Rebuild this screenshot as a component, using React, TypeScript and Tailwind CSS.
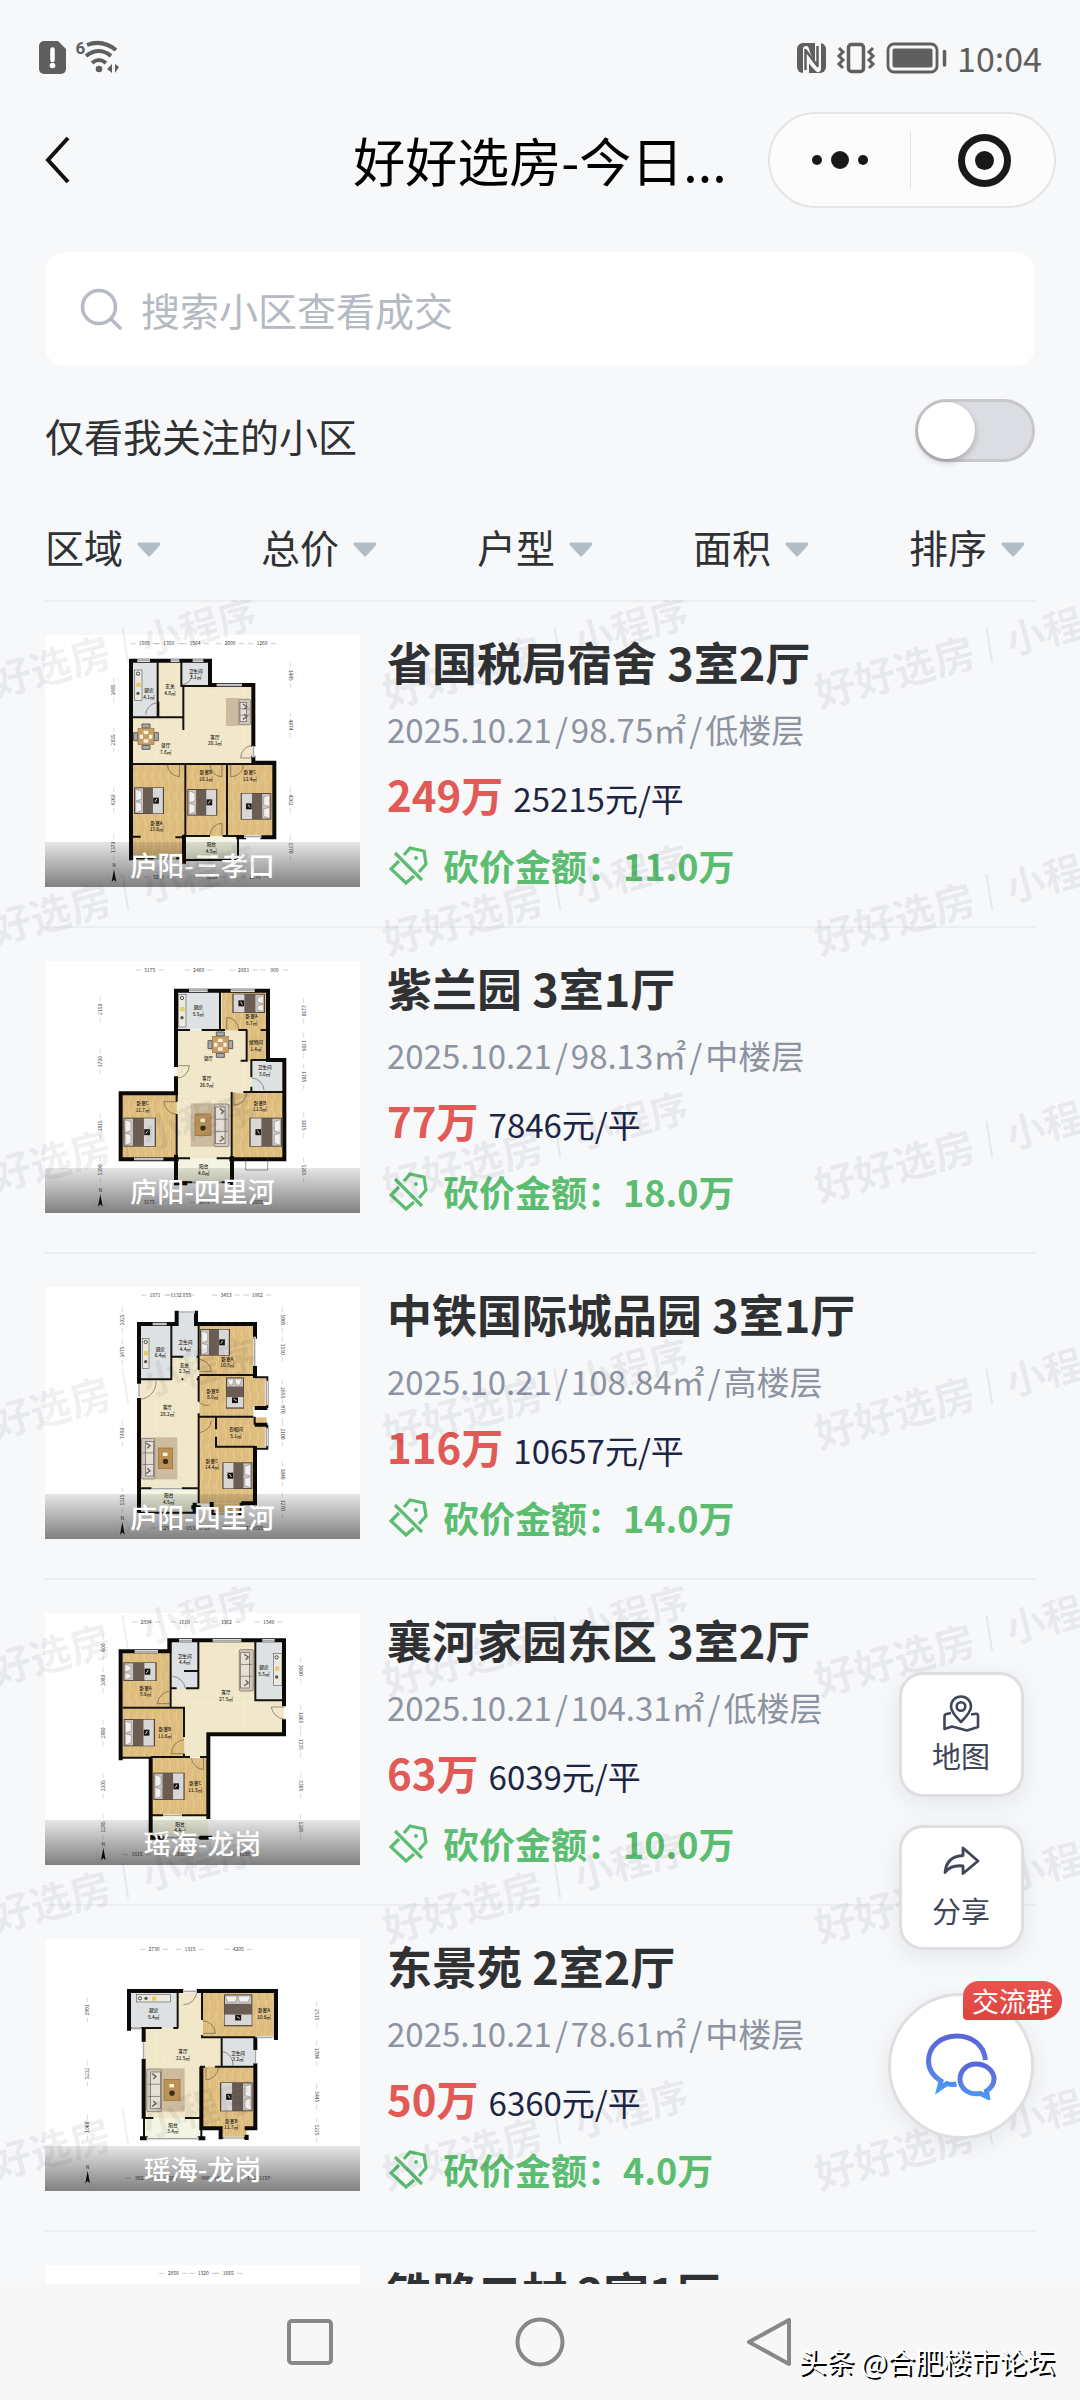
import React from "react";

type Rect = [number, number, number, number];
type BedSpec = [number, number, number, number, ("left" | "right" | "up")?];
type Label = [number, number, string, string?];
type Plan = {
  top: number;
  wood?: Rect[];
  cream?: Rect[];
  tile?: Rect[];
  balcony?: Rect[];
  thick?: string;
  thin?: string;
  windows?: string;
  doors?: string;
  beds?: BedSpec[];
  sofa?: Rect;
  sofaSide?: "left" | "right";
  rug?: Rect;
  coffee?: Rect;
  dining?: [number, number];
  stove?: Rect;
  labels?: Label[];
  dims: [number, number, string][];
  bottomDims?: [number, number, string][];
  leftX?: number;
  rightX?: number;
  leftDims?: [number, string][];
  rightDims?: [number, string][];
  north?: [number, number];
};

const plans: Record<string, Plan> = {
  sanxiaokou: {
    top: 45,
    wood: [[304, 435, 162, 285], [468, 435, 122, 214], [592, 435, 140, 214]],
    cream: [[385, 125, 75, 168], [304, 293, 160, 140], [460, 198, 210, 235]],
    tile: [[308, 125, 75, 165], [455, 125, 87, 70]],
    balcony: [[468, 650, 156, 70]],
    thick: "M303 715V122H540V195H670V375M670 413V428H733V652H697M462 725V650M642 652H625",
    thin: "M383 125V292M385 245V292M304 292H460M454 118V198H540M460 198V330M304 432H735M466 432V650M591 432V648M468 648H540M578 648H640M304 650H332M436 652H466M624 650V720H468M310 715H370M415 715H462",
    windows: "M322 122H360M488 122H520M560 195H636M642 650H694M372 715H438M422 122H448M670 378V412",
    doors: "M383 248a38 38 0 0 0-36 36M412 434a38 38 0 0 0 36 36V434M540 434a36 36 0 0 0 36 36V434M602 434v36a36 36 0 0 0 38-36M668 376a38 38 0 0 0-36 38h36M540 644a36 36 0 0 1 36-34v36M486 160a32 32 0 0 1-30 34",
    beds: [[312, 502, 90, 80], [472, 507, 90, 80], [632, 519, 92, 80, "right"]],
    sofa: [627, 238, 35, 76],
    sofaSide: "right",
    rug: [588, 234, 40, 84],
    dining: [348, 350],
    stove: [314, 150, 22, 92],
    labels: [[357, 218, "厨房", "4.1㎡"], [420, 206, "玄关", "4.8㎡"], [497, 160, "卫生间", "3.1㎡"], [555, 358, "客厅", "20.1㎡"], [407, 384, "餐厅", "7.8㎡"], [380, 616, "卧室A", "13.6㎡"], [528, 464, "卧室B", "10.1㎡"], [660, 464, "卧室C", "12.4㎡"], [544, 680, "阳台", "4.5㎡"]],
    dims: [[343, 76, "1505"], [416, 76, "1350"], [495, 76, "1564"], [600, 76, "2600"], [696, 76, "1260"]],
    bottomDims: [[385, 776, "3250"], [545, 776, "3230"], [675, 776, "2170"]],
    leftX: 251, rightX: 781,
    leftDims: [[210, "3485"], [360, "2835"], [540, "4260"], [682, "1370"]],
    rightDims: [[166, "1445"], [315, "4874"], [540, "4262"], [684, "1370"]],
    north: [252, 768],
  },
  silihe: {
    top: 33,
    wood: [[575, 123, 140, 118], [652, 240, 62, 92], [275, 430, 166, 196], [605, 428, 156, 198]],
    cream: [[440, 240, 208, 95], [440, 330, 225, 98], [440, 425, 165, 200]],
    tile: [[440, 123, 132, 115], [665, 330, 95, 95]],
    balcony: [[440, 624, 165, 72]],
    thick: "M438 345V122H714V330H763V628H604M438 385V430H272V628H440M438 620V700H466M606 624V702",
    thin: "M570 122V240M440 240H480M515 240H585M625 240H652M692 240H714M650 240V332H632M664 330V382M664 410V425M640 426H760M605 426V700M440 430V455M440 492V625M440 625H480M560 625H605M438 697H606M662 330H714",
    windows: "M477 122H533M602 122H674M312 627H400M486 698H575",
    doors: "M440 347h38a40 40 0 0 1-38 38M590 240v-38a38 38 0 0 1 36 38M666 384a38 38 0 0 1 36 36M612 428v38a40 40 0 0 0 38-38M440 455h-38a40 40 0 0 0 36 38M647 626v34h66v-34",
    beds: [[607, 131, 98, 58, "right"], [280, 503, 98, 87], [658, 503, 98, 87, "right"]],
    sofa: [553, 462, 44, 128],
    sofaSide: "right",
    rug: [482, 460, 72, 130],
    coffee: [495, 492, 48, 65],
    dining: [571, 284],
    stove: [446, 133, 22, 98],
    labels: [[505, 180, "厨房", "5.5㎡"], [665, 206, "卧室A", "6.7㎡"], [678, 284, "储物间", "1.4㎡"], [535, 333, "餐厅"], [530, 393, "客厅", "26.9㎡"], [704, 360, "卫生间", "3.0㎡"], [338, 468, "卧室C", "11.7㎡"], [690, 466, "卧室B", "11.5㎡"], [521, 657, "阳台", "4.0㎡"]],
    dims: [[359, 65, "3175"], [506, 65, "2460"], [641, 65, "2661"], [733, 65, "900"]],
    bottomDims: [[358, 762, "3175"], [522, 762, "3075"], [682, 762, "2865"]],
    leftX: 211, rightX: 821,
    leftDims: [[178, "2150"], [335, "3700"], [528, "3815"], [660, "1390"]],
    rightDims: [[182, "2230"], [287, "1705"], [380, "1705"], [525, "3815"], [660, "1265"]],
    north: [211, 752],
  },
  guoji: {
    top: 51,
    wood: [[508, 165, 167, 150], [508, 317, 162, 125], [668, 325, 40, 85], [560, 442, 150, 90], [508, 442, 52, 258], [508, 530, 167, 170], [545, 700, 92, 28]],
    cream: [[427, 262, 78, 70], [330, 328, 176, 328]],
    tile: [[332, 165, 92, 165], [425, 165, 78, 98], [445, 128, 55, 45]],
    balcony: [[330, 656, 176, 70]],
    thick: "M327 335V162H440M440 128V162M498 128V162H675V200M675 294V318M680 414H706M680 464H706M675 534V700H640M327 390V722M494 722V704M545 702V728M490 712H506M635 704V728",
    thin: "M424 165V330M332 328H424M427 260H460M500 260H506M455 328H460M500 328H506M506 165V300M508 315H675M506 318V395M506 430V700M508 440H670M558 440V478M558 500V530H675M330 655H365M455 655H506M327 728H505M674 322H712V414M674 440V464M712 464V536H674M545 732H640M436 126H503",
    windows: "M368 162H410M446 126H495M674 200V288M710 332V405M710 475V528M558 732H625M365 656H455M327 342V382",
    doors: "M330 388a52 52 0 0 0 48-56M506 268a40 40 0 0 1 38 36H506M506 488a40 40 0 0 0 38-36M506 396a36 36 0 0 0 32 10",
    beds: [[510, 177, 90, 80], [588, 322, 54, 94, "up"], [577, 577, 90, 80, "right"]],
    sofa: [334, 505, 40, 122],
    sofaSide: "left",
    rug: [372, 502, 70, 126],
    coffee: [385, 534, 43, 62],
    stove: [337, 205, 20, 90],
    labels: [[391, 244, "厨房", "6.4㎡"], [466, 224, "卫生间", "4.4㎡"], [463, 292, "玄关", "2.3㎡"], [592, 274, "卧室A", "10.5㎡"], [548, 370, "卧室B", "8.0㎡"], [412, 420, "客厅", "28.2㎡"], [618, 486, "衣帽间", "5.1㎡"], [546, 580, "卧室C", "14.4㎡"], [416, 684, "阳台", "4.5㎡"]],
    dims: [[375, 80, "1871"], [452, 80, "1132 855"], [588, 80, "3453"], [682, 80, "1062"]],
    bottomDims: [[402, 779, "3525"], [504, 779, "1534 1753"], [590, 779, "850"], [665, 779, "1127 1025"]],
    leftX: 277, rightX: 757,
    leftDims: [[150, "1025"], [246, "3475"], [490, "7480"], [690, "1315"]],
    rightDims: [[150, "1005"], [238, "3150"], [368, "2655"], [418, "970"], [492, "2100"], [612, "3840"], [706, "1270"]],
    north: [277, 776],
  },
  longgang: {
    top: 38,
    wood: [[278, 150, 145, 174], [278, 325, 185, 148], [365, 473, 168, 172]],
    cream: [[505, 120, 172, 200], [425, 265, 90, 60], [463, 300, 300, 100], [463, 320, 70, 150]],
    tile: [[422, 120, 84, 146], [677, 122, 85, 180]],
    balcony: [[367, 645, 168, 66]],
    thick: "M272 474V153H418V120H762V312M762 363V402H535V650M362 476V712H394M540 712H514",
    thin: "M422 120V320M505 120V265M425 264H440M468 264H506M462 212H505M676 122V300H762M278 322H462V350M462 322V410M462 460V470M272 472H365M362 470H480M510 470H535M365 645H400M455 645H535M362 712H540M424 322H418",
    windows: "M314 153H384M447 120H486M548 120H634M697 120H734M400 645H455M405 712H505",
    doors: "M424 272a42 42 0 0 0-42 38h40M428 228a42 42 0 0 1 38 36M724 320a42 42 0 0 0 38 36M762 320h-38M462 418a42 42 0 0 0-38 42h38M484 472a40 40 0 0 0 36 36V472",
    beds: [[280, 186, 100, 56], [281, 356, 94, 82], [370, 517, 94, 82]],
    sofa: [628, 148, 42, 124],
    sofaSide: "right",
    stove: [730, 160, 26, 96],
    labels: [[347, 270, "卧室A", "9.6㎡"], [464, 174, "卫生间", "4.4㎡"], [588, 284, "客厅", "27.5㎡"], [702, 208, "厨房", "5.5㎡"], [405, 394, "卧室B", "11.6㎡"], [496, 556, "卧室C", "11.5㎡"], [450, 678, "阳台", "4.4㎡"]],
    dims: [[348, 70, "2894"], [463, 70, "1610"], [589, 70, "3362"], [716, 70, "1540"]],
    bottomDims: [[321, 768, "1815"], [448, 768, "3338"], [643, 768, "4838"]],
    leftX: 219, rightX: 812,
    leftDims: [[142, "600"], [240, "3080"], [398, "2880"], [556, "3305"], [680, "1285"]],
    rightDims: [[210, "3600"], [352, "1865"], [432, "1335"], [556, "3305"], [680, "1285"]],
    north: [220, 762],
  },
  dongjing: {
    top: 57,
    wood: [[518, 218, 220, 134], [515, 440, 158, 184], [578, 620, 72, 34]],
    cream: [[445, 218, 72, 140], [345, 324, 172, 270], [505, 350, 72, 92]],
    tile: [[302, 218, 140, 106], [577, 352, 96, 88]],
    balcony: [[342, 594, 172, 62]],
    thick: "M297 326V213H454M506 213H738V354M341 330V360M341 422V590M676 358V384M676 436V625H650M514 446V625H572V652M650 650V654M336 655H347M509 655H520",
    thin: "M443 218V324M302 324H395M430 324H445M516 218V300M516 345V352H676M575 352V440M510 440H525M555 440H676M345 594H370M465 594H514M342 594V656M514 594V656M342 657H514M578 654H650",
    windows: "M460 214H500M341 365V417M676 390V430M682 352H728M350 656H506M580 654H642M304 326H334",
    doors: "M500 218a40 40 0 0 1-40 36M518 302a40 40 0 0 1 38 38H520M577 394a40 40 0 0 1 32 42M528 442v38a42 42 0 0 0 38-38",
    beds: [[582, 223, 85, 96, "up"], [570, 487, 98, 87, "right"]],
    sofa: [350, 447, 44, 128],
    sofaSide: "left",
    rug: [392, 445, 72, 130],
    coffee: [402, 478, 48, 64],
    stove: [320, 224, 102, 22],
    labels: [[371, 278, "厨房", "5.4㎡"], [702, 279, "卧室A", "10.6㎡"], [459, 402, "客厅", "21.5㎡"], [624, 406, "卫生间", "3.2㎡"], [604, 610, "卧室B", "11.7㎡"], [429, 622, "阳台", "3.4㎡"]],
    dims: [[372, 93, "2730"], [480, 93, "1315"], [625, 93, "4205"]],
    bottomDims: [[328, 779, "902"], [425, 779, "3201"], [545, 779, "900 1348"], [685, 779, "1702 1157"]],
    leftX: 172, rightX: 860,
    leftDims: [[270, "1991"], [460, "5232"], [622, "1068"]],
    rightDims: [[284, "2515"], [400, "1704"], [530, "3445"], [630, "1225"]],
    north: [173, 772],
  },
  tielu: {
    top: 0,
    dims: [[430, 30, "2850"], [520, 30, "1320"], [595, 30, "1665"]],
  },
};

function Bed({ spec }: { spec: BedSpec }) {
  const [x, y, w, h, dir = "left"] = spec;
  const long = dir === "up" ? h : w;
  const wide = dir === "up" ? w : h;
  const turn =
    dir === "right"
      ? `translate(${x + w} ${y}) scale(-1 1)`
      : dir === "up"
        ? `translate(${x + w} ${y}) rotate(90)`
        : `translate(${x} ${y})`;
  return (
    <g transform={turn}>
      <rect width={long} height={wide} fill="#55483f" />
      <rect x="3" y="3" width={long * 0.27} height={wide - 6} fill="#c9c5c2" />
      <path d={`M5 6l18 6v${wide / 2 - 16}l-18 5zM5 ${wide / 2 + 3}l18 5v${wide / 2 - 18}l-18 6z`} fill="#f2f0ee" stroke="#7d7570" strokeWidth="1.5" />
      <rect x={long * 0.3} y="2" width={long * 0.33} height={wide - 4} fill="#695d54" />
      <rect x={long * 0.63} y="2" width={long * 0.33} height={wide - 4} fill="#d9d7d5" />
      <rect x={long * 0.64} y={wide / 2 - 9} width="17" height="18" fill="#17130f" />
      <path d={`M${long * 0.64 + 5} ${wide / 2 + 4}l6-9`} stroke="#fff" strokeWidth="2.5" />
    </g>
  );
}

function Rects({ list, fill }: { list?: Rect[]; fill: string }) {
  return (
    <>
      {(list ?? []).map(([x, y, w, h]) => (
        <rect key={`${x}-${y}-${w}`} x={x} y={y} width={w} height={h} fill={fill} />
      ))}
    </>
  );
}

function FloorPlan({ id }: { id: string }) {
  const p = plans[id];
  const wood = `wood-${id}`;
  const cream = `cream-${id}`;
  const tile = `tile-${id}`;
  const bottom = p.bottomDims ?? [];
  return (
    <svg viewBox={`45 ${p.top} 945 756`} className="block h-full w-full bg-white" role="img" aria-label="户型图">
      <defs>
        <pattern id={wood} width="24" height="60" patternUnits="userSpaceOnUse">
          <rect width="24" height="60" fill="#e0c083" />
          <path d="M4 0v40M10 20v40M17 0v60M22 10v30" stroke="#d8b372" strokeWidth="2" />
          <path d="M13 0v30M7 30v30" stroke="#e9cf98" strokeWidth="2" />
        </pattern>
        <pattern id={cream} width="22" height="22" patternUnits="userSpaceOnUse">
          <rect width="22" height="22" fill="#f2e8cb" />
          <path d="M2 4l5 3M12 15l6-4M14 3l3 4" stroke="#e8dab4" strokeWidth="2.5" />
        </pattern>
        <pattern id={tile} width="12" height="12" patternUnits="userSpaceOnUse">
          <rect width="12" height="12" fill="#dfe2e4" />
          <path d="M0 0H12M0 0V12" stroke="#d3d7da" />
        </pattern>
      </defs>
      <Rects list={p.cream} fill={`url(#${cream})`} />
      <Rects list={p.wood} fill={`url(#${wood})`} />
      <Rects list={p.tile} fill={`url(#${tile})`} />
      <Rects list={p.balcony} fill="#f3f5e2" />
      {p.rug && <rect x={p.rug[0]} y={p.rug[1]} width={p.rug[2]} height={p.rug[3]} fill="#cdbba0" />}
      {p.coffee && (
        <g>
          <rect x={p.coffee[0]} y={p.coffee[1]} width={p.coffee[2]} height={p.coffee[3]} fill="#bb9256" stroke="#97713b" strokeWidth="2" />
          <circle cx={p.coffee[0] + p.coffee[2] / 2} cy={p.coffee[1] + p.coffee[3] * 0.65} r="8" fill="#3a2d1f" />
          <rect x={p.coffee[0] + p.coffee[2] / 2 - 8} y={p.coffee[1] + 14} width="14" height="10" fill="#f5efe6" />
        </g>
      )}
      {p.sofa && (
        <g stroke="#6a605a" strokeWidth="2">
          <rect x={p.sofa[0]} y={p.sofa[1]} width={p.sofa[2]} height={p.sofa[3]} rx="4" fill="#cfc6bd" />
          <rect x={p.sofa[0] + (p.sofaSide === "right" ? 3 : 12)} y={p.sofa[1] + 9} width={p.sofa[2] - 15} height={p.sofa[3] - 18} fill="#e6dfd8" />
          <path d={`M${p.sofa[0] + 4} ${p.sofa[1] + p.sofa[3] / 3 + 3}h${p.sofa[2] - 8}M${p.sofa[0] + 4} ${p.sofa[1] + (p.sofa[3] * 2) / 3 - 3}h${p.sofa[2] - 8}`} fill="none" />
          <path d={`M${p.sofa[0] + p.sofa[2] / 2 - 6} ${p.sofa[1] + 14}l12 8-8 8M${p.sofa[0] + p.sofa[2] / 2 - 6} ${p.sofa[1] + p.sofa[3] - 16}l12-8-8-8`} fill="none" strokeWidth="4" />
        </g>
      )}
      {p.dining && (
        <g transform={`translate(${p.dining[0]} ${p.dining[1]})`}>
          <path d="M-12-38h24v12h-24zM-12 26h24v12h-24zM-37-12h12v24h-12zM25-12h12v24h-12z" fill="#a9a9aa" stroke="#5d5d5f" strokeWidth="3" />
          <rect x="-24" y="-24" width="48" height="48" fill="#c79e66" stroke="#95703f" strokeWidth="2" />
          <path d="M-7-18h14v10h-14zM-7 8h14v10h-14zM-19-6h10v12h-10zM9-6h10v12h-10z" fill="#f7f1e4" />
        </g>
      )}
      {p.stove && (
        <g>
          <rect x={p.stove[0]} y={p.stove[1]} width={p.stove[2]} height={p.stove[3]} fill="#eceae0" stroke="#3c3c3c" strokeWidth="1.5" />
          <rect x={p.stove[0] + (p.stove[2] > p.stove[3] ? 46 : 5)} y={p.stove[1] + (p.stove[2] > p.stove[3] ? 5 : 38)} width="13" height="13" fill="#e6cf62" />
          <circle cx={p.stove[0] + 10} cy={p.stove[1] + 11} r="5" fill="none" stroke="#333" strokeWidth="2.5" />
          <circle cx={p.stove[0] + (p.stove[2] > p.stove[3] ? 28 : 10)} cy={p.stove[1] + (p.stove[2] > p.stove[3] ? 11 : 70)} r="5" fill="#555" />
        </g>
      )}
      {(p.beds ?? []).map((b) => (
        <Bed key={`${b[0]}-${b[1]}`} spec={b} />
      ))}
      <g fill="none">
        <path d={p.thin} stroke="#15120e" strokeWidth="6" />
        <path d={p.thick} stroke="#0c0a08" strokeWidth="12" strokeLinecap="square" />
        <path d={p.windows} stroke="#e9ebec" strokeWidth="8" />
        <path d={p.windows} stroke="#6d7173" strokeWidth="2" />
        <path d={p.doors} stroke="#5a5240" strokeWidth="1.8" />
      </g>
      <g fill="#2b2620" fontSize="14" fontWeight="500" textAnchor="middle">
        {(p.labels ?? []).map(([x, y, a, b]) => (
          <g key={`${x}-${y}`}>
            <text x={x} y={y - 2}>{a}</text>
            {b && <text x={x} y={y + 18}>{b}</text>}
          </g>
        ))}
      </g>
      <g fill="#3c3c3c" fontSize="15" textAnchor="middle">
        {[...p.dims, ...bottom].map(([x, y, t]) => (
          <g key={`${x}-${y}`}>
            <text x={x} y={y}>{t}</text>
            <path d={`M${x - 42} ${y - 5}h16M${x + 26} ${y - 5}h16`} stroke="#9a9a9a" strokeWidth="1.5" />
          </g>
        ))}
        {(p.leftDims ?? []).map(([y, t]) => (
          <g key={`l${y}`} transform={`translate(${(p.leftX ?? 0) + 5} ${y}) rotate(-90)`}>
            <text>{t}</text>
            <path d="M-38-5h14M24-5h14" stroke="#b5b5b5" strokeWidth="1.5" />
          </g>
        ))}
        {(p.rightDims ?? []).map(([y, t]) => (
          <g key={`r${y}`} transform={`translate(${(p.rightX ?? 0) - 5} ${y}) rotate(90)`}>
            <text>{t}</text>
            <path d="M-38-5h14M24-5h14" stroke="#b5b5b5" strokeWidth="1.5" />
          </g>
        ))}
        {p.north && (
          <g transform={`translate(${p.north[0]} ${p.north[1]})`}>
            <text y="-26">N</text>
            <circle r="20" fill="none" stroke="#8a8a8a" strokeDasharray="3 6" />
            <path d="M0-20L7 18L0 11L-7 18z" fill="#161616" />
          </g>
        )}
      </g>
    </svg>
  );
}

type Listing = {
  plan: string;
  area: string;
  title: string;
  size: string;
  floor: string;
  price: string;
  unit: string;
  cut: string;
};

const listings: Listing[] = [
  { plan: "sanxiaokou", area: "庐阳-三孝口", title: "省国税局宿舍 3室2厅", size: "98.75㎡", floor: "低楼层", price: "249万", unit: "25215元/平", cut: "11.0万" },
  { plan: "silihe", area: "庐阳-四里河", title: "紫兰园 3室1厅", size: "98.13㎡", floor: "中楼层", price: "77万", unit: "7846元/平", cut: "18.0万" },
  { plan: "guoji", area: "庐阳-四里河", title: "中铁国际城品园 3室1厅", size: "108.84㎡", floor: "高楼层", price: "116万", unit: "10657元/平", cut: "14.0万" },
  { plan: "longgang", area: "瑶海-龙岗", title: "襄河家园东区 3室2厅", size: "104.31㎡", floor: "低楼层", price: "63万", unit: "6039元/平", cut: "10.0万" },
  { plan: "dongjing", area: "瑶海-龙岗", title: "东景苑 2室2厅", size: "78.61㎡", floor: "中楼层", price: "50万", unit: "6360元/平", cut: "4.0万" },
  { plan: "tielu", area: "瑶海", title: "铁路二村 2室1厅", size: "55.20㎡", floor: "中楼层", price: "45万", unit: "8152元/平", cut: "3.0万" },
];

function CutIcon() {
  return (
    <svg viewBox="0 0 40 40" className="h-10 w-10 shrink-0" fill="none" stroke="#5bbd6f" strokeWidth="3.2" aria-hidden="true">
      <path d="M15 10L21 3L35 6L37 19L30 27" />
      <path d="M10 16L2 24L17 38L25 31" />
      <path d="M6 8L33 35" />
      <circle cx="27" cy="13" r="2" fill="#5bbd6f" stroke="none" />
    </svg>
  );
}

function ListingRow({ item }: { item: Listing }) {
  return (
    <li className="flex gap-[27px] border-b-2 border-[#eceef0] pt-[33px] pb-[39px]">
      <div className="relative h-[252px] w-[315px] shrink-0 overflow-hidden">
        <FloorPlan id={item.plan} />
        <p className="absolute inset-x-0 bottom-0 bg-linear-to-b from-black/10 to-black/50 text-center text-[27px] leading-[45px] font-medium text-white">
          {item.area}
        </p>
      </div>
      <div className="min-w-0 flex-1">
        <h2 className="text-[45px] leading-[54px] font-bold whitespace-nowrap text-[#303133]">{item.title}</h2>
        <p className="mt-[18px] flex gap-[3px] text-[33px] leading-[44px] text-[#8d93a1]">
          <span>2025.10.21</span>
          <span>/</span>
          <span>{item.size}</span>
          <span>/</span>
          <span>{item.floor}</span>
        </p>
        <p className="mt-[18px] flex h-[50px] items-baseline gap-[10px] leading-[50px]">
          <strong className="text-[42px] font-bold text-[#e15a56]">{item.price}</strong>
          <span className="text-[33px] text-[#1c2544]">{item.unit}</span>
        </p>
        <p className="mt-6 flex items-center gap-[14px] pl-[2px] text-[36px] leading-[44px] font-bold text-[#5bbd6f]">
          <CutIcon />
          <span>砍价金额：{item.cut}</span>
        </p>
      </div>
    </li>
  );
}

function Watermark() {
  return (
    <div aria-hidden="true" className="pointer-events-none absolute inset-0 overflow-hidden">
      <div className="-mt-[73px] -ml-[113px] grid auto-rows-[247px] grid-cols-[432px_432px_432px]">
        {Array.from({ length: 21 }, (_, i) => (
          <div key={i} className="flex -rotate-15 items-center justify-center gap-4 whitespace-nowrap text-slate-900/7">
            <span className="text-[41px] font-bold">好好选房</span>
            <span className="h-9 w-0.5 rotate-6 bg-slate-900/7" />
            <span className="text-[39px] font-bold">小程序</span>
          </div>
        ))}
      </div>
    </div>
  );
}

function StatusBar() {
  return (
    <div className="flex h-28 items-center justify-between pt-1 pr-[38px] pl-[39px] text-[#5f5f5f]">
      <div className="flex items-center">
        <svg viewBox="0 0 84 36" className="h-9 w-[84px]" aria-label="信号">
          <path d="M5 1H19L27 9V29a5 5 0 0 1-5 5H5a5 5 0 0 1-5-5V6a5 5 0 0 1 5-5Z" fill="currentColor" />
          <path d="M13.500 9.500V20" stroke="#fff" strokeWidth="4.500" strokeLinecap="round" />
          <circle cx="13.500" cy="25.500" r="2.800" fill="#fff" />
          <text x="36.500" y="14" fontSize="17" fontWeight="700" fill="currentColor" fontFamily="Roboto">6</text>
          <g fill="none" stroke="currentColor" strokeWidth="4">
            <path d="M48 5Q63-1 77 10" />
            <path d="M47 16Q60 6 72 16" />
            <path d="M53 23Q60 17 67 23" />
          </g>
          <circle cx="60" cy="29" r="3.300" fill="currentColor" />
          <path d="M73 24v9L68 29Z M76 33v-9l4 3Z" fill="currentColor" />
        </svg>
      </div>
      <div className="flex items-center gap-[9px]">
        <svg viewBox="0 0 152 32" className="h-8 w-[152px]" aria-label="NFC 振动 电池">
          <rect x="1" y="1" width="29" height="30" rx="6" fill="currentColor" />
          <path d="M10 31V7Q12 18 22 27V1" fill="none" stroke="#f7f8fa" strokeWidth="6" strokeLinejoin="round" />
          <path d="M9.500 28V8L21.500 24V4" fill="none" stroke="currentColor" strokeWidth="2.500" strokeLinejoin="round" />
          <rect x="52.500" y="2.500" width="15" height="27" rx="3" fill="none" stroke="currentColor" strokeWidth="3.500" />
          <path d="M43 6l4 4-4 4 4 4-4 4 4 4M77 6l-4 4 4 4-4 4 4 4-4 4" fill="none" stroke="currentColor" strokeWidth="3" />
          <rect x="92" y="2" width="49" height="28" rx="6" fill="none" stroke="currentColor" strokeWidth="2.800" />
          <rect x="96.500" y="6.500" width="40" height="19" rx="2" fill="currentColor" />
          <path d="M148.500 9.500V23" stroke="currentColor" strokeWidth="3.500" strokeLinecap="round" />
        </svg>
        <time className="text-[34px] leading-9">10:04</time>
      </div>
    </div>
  );
}

function Header() {
  return (
    <header className="relative flex h-24 items-center pr-6 pl-[42px]">
      <button type="button" aria-label="返回" className="flex h-16 w-16 items-center">
        <svg viewBox="0 0 32 48" className="h-12 w-8" fill="none" stroke="#111" strokeWidth="4">
          <path d="M26 2L6 24L26 46" />
        </svg>
      </button>
      <h1 className="absolute inset-x-0 text-center text-[52px] leading-[60px] text-black">好好选房-今日...</h1>
      <div className="relative ml-auto flex h-24 w-72 items-center rounded-full border-2 border-[#e4e5e7] bg-[#fcfcfd]">
        <button type="button" aria-label="更多" className="flex flex-1 items-center justify-center gap-[9px]">
          <span className="h-[10px] w-[10px] rounded-full bg-[#191919]" />
          <span className="h-[18px] w-[18px] rounded-full bg-[#191919]" />
          <span className="h-[10px] w-[10px] rounded-full bg-[#191919]" />
        </button>
        <span className="h-14 w-px bg-[#dedfe1]" />
        <button type="button" aria-label="关闭" className="flex flex-1 items-center justify-center pl-1">
          <span className="flex h-[53px] w-[53px] items-center justify-center rounded-full border-[7px] border-[#191919]">
            <span className="h-[19px] w-[19px] rounded-full bg-[#191919]" />
          </span>
        </button>
      </div>
    </header>
  );
}

function FloatingActions() {
  return (
    <div className="absolute right-[46px] bottom-[145px] flex flex-col items-end">
      <div className="flex w-[146px] flex-col items-center gap-7">
        <button type="button" className="flex h-[125px] w-[125px] flex-col items-center justify-center gap-[2px] rounded-3xl border-[3px] border-[#dedfe2] bg-white text-[29px] leading-[42px] text-[#3f4658] shadow-[0_6px_24px_rgba(0,0,0,0.08)]">
          <svg viewBox="0 0 38 38" className="h-[38px] w-[38px]" fill="none" stroke="currentColor" strokeWidth="2.600" strokeLinejoin="round" aria-hidden="true">
            <path d="M19 28C12 21 9 17 9 12.500a10 10 0 0 1 20 0C29 17 26 21 19 28Z" />
            <circle cx="19" cy="12.500" r="4.300" />
            <path d="M9 19L4.500 20Q2.500 20.500 2.500 22.500V35L10 32.500L25 36.500L36 33V22Q36 19.500 34 19.700L29 20.500" />
          </svg>
          地图
        </button>
        <button type="button" className="flex h-[125px] w-[125px] flex-col items-center justify-center gap-3 rounded-3xl border-[3px] border-[#dedfe2] bg-white text-[29px] leading-[42px] text-[#3f4658] shadow-[0_6px_24px_rgba(0,0,0,0.08)]">
          <svg viewBox="0 0 38 32" className="h-8 w-[38px]" fill="none" stroke="currentColor" strokeWidth="2.800" strokeLinejoin="round" aria-hidden="true">
            <path d="M21 3L36 16L21 28.500V21C13 20 7 22 3 27.500C4 17 10 11 21 10.500Z" />
          </svg>
          分享
        </button>
      </div>
      <button type="button" aria-label="交流群" className="relative mt-[43px] flex h-[146px] w-[146px] items-center justify-center rounded-full border-[3px] border-[#dedfe2] bg-white shadow-[0_6px_24px_rgba(0,0,0,0.08)]">
        <svg viewBox="0 0 72 68" className="h-[68px] w-[72px]" fill="none" strokeWidth="5" aria-hidden="true">
          <defs>
            <linearGradient id="chat-big" x1="0" y1="0" x2="0" y2="60" gradientUnits="userSpaceOnUse">
              <stop offset="0" stopColor="#5a62d8" />
              <stop offset="0.6" stopColor="#5a7be6" />
              <stop offset="1" stopColor="#4b9af2" />
            </linearGradient>
            <linearGradient id="chat-small" x1="0" y1="28" x2="0" y2="66" gradientUnits="userSpaceOnUse">
              <stop offset="0" stopColor="#5a62d8" />
              <stop offset="0.6" stopColor="#5a7be6" />
              <stop offset="1" stopColor="#4b9af2" />
            </linearGradient>
          </defs>
          <path d="M60.500 28C59 13 47 4 32 4C15 4 3.500 15 3.500 29C3.500 38 8 44 16 49L14 57L22 51.500C26 53 28 53 31.500 52" stroke="url(#chat-big)" />
          <path d="M51 32C61 32 69 38.500 69 47C69 52 66 56 61.500 59L62.500 65L55.500 61.500C43 63.500 35 56 35 47C35 38.500 42 32 51 32Z" stroke="url(#chat-small)" />
        </svg>
        <span className="absolute -top-[15px] -right-[31px] rounded-l-2xl rounded-r-[20px] rounded-bl bg-linear-to-b from-[#ea5350] to-[#df433e] px-[9px] text-[27px] leading-[39px] whitespace-nowrap text-white">
          交流群
        </span>
      </button>
    </div>
  );
}

const filters = ["区域", "总价", "户型", "面积", "排序"];

export default function App() {
  return (
    <div className="flex h-screen flex-col overflow-hidden bg-[#f7f8fa] font-['Noto_Sans_CJK_SC',sans-serif] text-[#303133]">
      <StatusBar />
      <Header />
      <main className="relative flex min-h-0 flex-1 flex-col">
        <section className="px-[45px] pt-11 pb-[26px]">
          <label className="flex h-[114px] items-center gap-[19px] rounded-[20px] bg-white px-[35px]">
            <svg viewBox="0 0 42 42" className="h-[42px] w-[42px] shrink-0" fill="none" stroke="#b5bac3" strokeWidth="3.500" aria-hidden="true">
              <circle cx="19" cy="19" r="16.500" />
              <path d="M31 31L40 40" strokeLinecap="round" />
            </svg>
            <input type="search" aria-label="搜索小区" placeholder="搜索小区查看成交" className="min-w-0 flex-1 bg-transparent text-[39px] leading-[54px] outline-none placeholder:text-[#b5b9c1]" />
          </label>
          <label className="mt-[33px] flex h-[63px] items-end justify-between">
            <span className="text-[39px] leading-[54px]">仅看我关注的小区</span>
            <input
              type="checkbox"
              role="switch"
              className="h-[63px] w-[120px] appearance-none rounded-full border-[3px] border-[#c7c8cb] bg-[#dcdde2] before:block before:h-[57px] before:w-[57px] before:rounded-full before:bg-white before:shadow-[0_3px_6px_rgba(0,0,0,0.25)] before:content-[''] checked:bg-[#5bbd6f] checked:before:ml-auto"
            />
          </label>
          <div className="mt-14 flex justify-between">
            {filters.map((name) => (
              <label key={name} className="flex w-[126px] items-center gap-3">
                <select aria-label={name} className="appearance-none bg-transparent text-[39px] leading-[56px] outline-none">
                  <option>{name}</option>
                </select>
                <svg viewBox="0 0 26 16" className="mt-2 h-4 w-[26px] shrink-0" aria-hidden="true">
                  <path d="M3 2H23L13 13Z" fill="#b2bdc6" stroke="#b2bdc6" strokeWidth="3" strokeLinejoin="round" />
                </svg>
              </label>
            ))}
          </div>
        </section>
        <section className="relative min-h-0 flex-1 overflow-hidden px-[45px]">
          <ul className="border-t-2 border-[#eceef0]">
            {listings.map((item) => (
              <ListingRow key={item.title} item={item} />
            ))}
          </ul>
          <Watermark />
        </section>
        <FloatingActions />
      </main>
      <nav className="relative flex h-[116px] shrink-0 items-center justify-center gap-[180px] bg-[#f7f7f7]">
        <button type="button" aria-label="最近任务">
          <svg viewBox="0 0 50 50" className="h-[50px] w-[50px]" fill="none" stroke="#888" strokeWidth="4">
            <rect x="4" y="4" width="42" height="42" rx="3" />
          </svg>
        </button>
        <button type="button" aria-label="主页">
          <svg viewBox="0 0 50 50" className="h-[50px] w-[50px]" fill="none" stroke="#888" strokeWidth="4">
            <circle cx="25" cy="25" r="22.500" />
          </svg>
        </button>
        <button type="button" aria-label="返回上一页">
          <svg viewBox="0 0 50 50" className="h-[50px] w-[50px]" fill="none" stroke="#888" strokeWidth="4" strokeLinejoin="round">
            <path d="M44 3V47L4 25Z" />
          </svg>
        </button>
        <p className="absolute right-[25px] bottom-[19px] text-[28px] leading-10 text-white [text-shadow:2px_2px_0_#000]">头条 @合肥楼市论坛</p>
      </nav>
    </div>
  );
}
